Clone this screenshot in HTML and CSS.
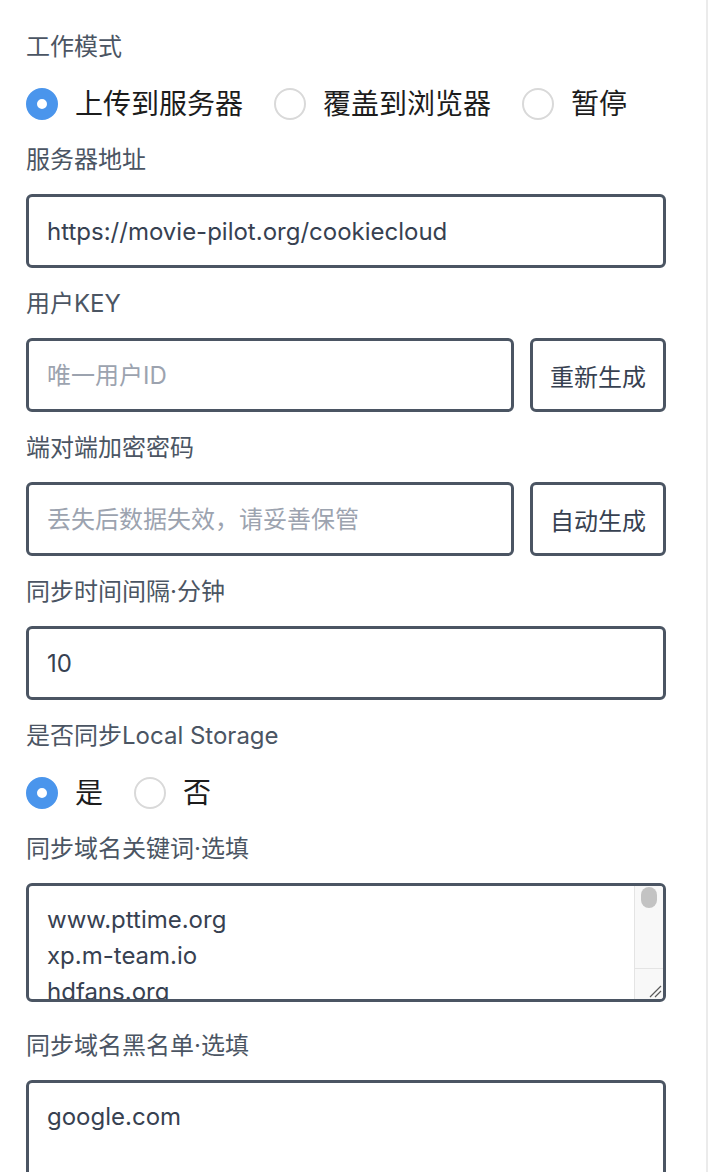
FILE: index.html
```html
<!DOCTYPE html>
<html lang="zh-CN">
<head>
<meta charset="utf-8">
<title>CookieCloud</title>
<link rel="stylesheet" href="styles.css">
</head>
<body>
<div class="panel">
  <div class="label">工作模式</div>
  <div class="radios">
    <label class="opt"><input class="radio" type="radio" name="mode" checked><span>上传到服务器</span></label>
    <label class="opt"><input class="radio" type="radio" name="mode"><span>覆盖到浏览器</span></label>
    <label class="opt"><input class="radio" type="radio" name="mode"><span>暂停</span></label>
  </div>

  <div class="label">服务器地址</div>
  <input class="input full" type="text" value="https://movie-pilot.org/cookiecloud">

  <div class="label">用户KEY</div>
  <div class="row">
    <input class="input grow" type="text" placeholder="唯一用户ID">
    <button class="btn" type="button">重新生成</button>
  </div>

  <div class="label">端对端加密密码</div>
  <div class="row">
    <input class="input grow" type="text" placeholder="丢失后数据失效，请妥善保管">
    <button class="btn" type="button">自动生成</button>
  </div>

  <div class="label">同步时间间隔·分钟</div>
  <input class="input full" type="text" value="10">

  <div class="label">是否同步Local Storage</div>
  <div class="radios">
    <label class="opt"><input class="radio" type="radio" name="ls" checked><span>是</span></label>
    <label class="opt"><input class="radio" type="radio" name="ls"><span>否</span></label>
  </div>

  <div class="label">同步域名关键词·选填</div>
  <div class="ta-wrap">
    <textarea class="ta">www.pttime.org
xp.m-team.io
hdfans.org
pt.btschool.club
hdhome.org
pterclub.com
audiences.me
hdsky.me
ourbits.club
springsunday.net
pthome.net
hdchina.org
open.cd
hdarea.club
tjupt.org
nicept.net</textarea>
    <div class="scrollbar">
      <div class="thumb"></div>
      <div class="corner">
        <svg width="14" height="14" viewBox="0 0 14 14"><path d="M2 13 L13 2 M7 13 L13 7" stroke="#5a5a5a" stroke-width="1.2" fill="none"/></svg>
      </div>
    </div>
  </div>

  <div class="label">同步域名黑名单·选填</div>
  <textarea class="ta ta2">google.com</textarea>
</div>
</body>
</html>
```

FILE: styles.css
```css
html, body {
  margin: 0;
  padding: 0;
  overflow: hidden;
  background: #ffffff;
}

body {
  font-family: "Inter", "Noto Sans CJK SC", sans-serif;
}

.panel {
  box-sizing: border-box;
  width: 708px;
  min-height: 1172px;
  padding: 29px 40px 0 26px;
  border-right: 2px solid #ebebeb;
  display: flex;
  flex-direction: column;
}

.label {
  font-size: 24px;
  line-height: 36px;
  color: #4b5563;
  margin-bottom: 16px;
}

.radios {
  display: flex;
  align-items: center;
  height: 40px;
  margin-top: 3px;
  margin-bottom: 18px;
}

.opt {
  display: flex;
  align-items: center;
  margin-right: 31px;
  font-size: 28px;
  line-height: 40px;
  color: #1c1c1c;
}

.radio {
  appearance: none;
  -webkit-appearance: none;
  box-sizing: border-box;
  width: 32px;
  height: 32px;
  margin: 0 17px 0 0;
  border-radius: 50%;
  border: 2px solid #d9d9d9;
  background: #ffffff;
  flex: none;
}

.radio:checked {
  border: 11px solid #4a95ec;
  background: #ffffff;
}

.input {
  box-sizing: border-box;
  height: 74px;
  padding: 16px 18px;
  border: 3px solid #4b5563;
  border-radius: 6px;
  font-family: "Inter", "Noto Sans CJK SC", sans-serif;
  font-size: 24px;
  line-height: 36px;
  color: #374151;
  background: #ffffff;
  outline: none;
  margin: 0 0 18px 0;
}

.input::placeholder {
  color: #9ca3af;
}

.full {
  width: 640px;
}

.row {
  display: flex;
  gap: 16px;
  margin-bottom: 18px;
}

.row .input {
  margin: 0;
}

.grow {
  flex: 1;
  min-width: 0;
}

.btn {
  box-sizing: border-box;
  width: 136px;
  height: 74px;
  padding: 0;
  border: 3px solid #4b5563;
  border-radius: 6px;
  background: #ffffff;
  font-family: "Inter", "Noto Sans CJK SC", sans-serif;
  font-size: 24px;
  color: #374151;
  flex: none;
}

.ta-wrap {
  position: relative;
  width: 640px;
  height: 119px;
  margin-bottom: 26px;
}

.ta {
  display: block;
  box-sizing: border-box;
  width: 640px;
  height: 119px;
  margin: 0;
  padding: 16px 40px 16px 18px;
  border: 3px solid #4b5563;
  border-radius: 6px;
  font-family: "Inter", "Noto Sans CJK SC", sans-serif;
  font-size: 24px;
  line-height: 36px;
  color: #374151;
  background: #ffffff;
  overflow: hidden;
  resize: none;
  outline: none;
}

.ta2 {
  height: 130px;
}

.scrollbar {
  position: absolute;
  top: 3px;
  right: 3px;
  bottom: 3px;
  width: 29px;
  box-sizing: border-box;
  background: #f8f8f8;
  border-left: 1px solid #e4e4e4;
  border-radius: 0 3px 3px 0;
  display: flex;
  flex-direction: column;
  justify-content: space-between;
  align-items: center;
}

.thumb {
  width: 16px;
  height: 21px;
  margin-top: 1px;
  border-radius: 8px;
  background: #c3c3c3;
}

.corner {
  box-sizing: border-box;
  width: 100%;
  height: 31px;
  border-top: 1px solid #e4e4e4;
  display: flex;
  justify-content: flex-end;
  align-items: flex-end;
  padding: 0 1px 1px 0;
}

.corner svg {
  display: block;
}
```
